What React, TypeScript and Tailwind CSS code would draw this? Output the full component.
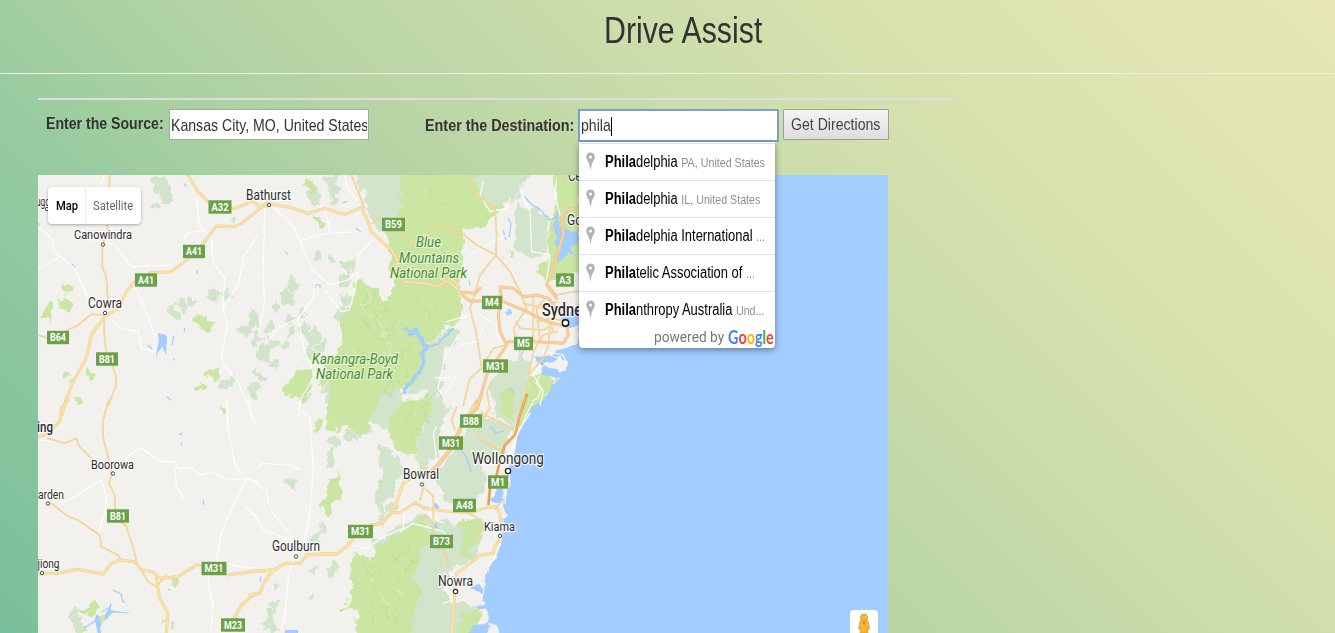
import React from "react";

const GREEN = "#cbe6a3";
const PALE = "#d2e4cb";
const WATER = "#a3ccff";
const LAND = "#f2f1ed";

type Suggestion = { match: string; rest: string; detail: string };

const suggestions: Suggestion[] = [
  { match: "Phila", rest: "delphia", detail: "PA, United States" },
  { match: "Phila", rest: "delphia", detail: "IL, United States" },
  { match: "Phila", rest: "delphia International", detail: "..." },
  { match: "Phila", rest: "telic Association of", detail: "..." },
  { match: "Phila", rest: "nthropy Australia", detail: "Und..." },
];

// Road shields: label, centre x, centre y, width
const shields: [string, number, number, number][] = [
  ["A32", 220, 207, 23], ["A41", 194, 251.5, 22], ["A41", 146, 280, 22],
  ["B64", 58, 337.5, 22], ["B81", 107, 359, 22], ["B59", 393.5, 224.5, 23],
  ["M4", 492, 302.5, 20], ["M5", 523.5, 343.5, 19], ["A3", 565, 280, 18],
  ["M31", 495.5, 366, 25], ["B88", 471, 421, 22], ["M31", 451, 443, 24],
  ["M1", 498, 482, 20], ["A48", 464.5, 505.5, 23], ["B73", 441.5, 541.5, 23],
  ["M31", 360.5, 531.5, 25], ["M31", 214, 568.5, 25], ["B81", 118, 516, 22],
  ["M23", 233, 625, 24],
];

// Town names: text, left, baseline, width, size, dot x, dot y
const towns: [string, number, number, number, number, number, number][] = [
  ["Bathurst", 246, 199.5, 45, 14, 269, 205],
  ["Canowindra", 74, 238.5, 58, 13.5, 103, 244.5],
  ["Cowra", 88, 307.5, 34, 14.5, 105, 313],
  ["Boorowa", 91, 469, 43, 13.5, 113, 473.5],
  ["arden", 38, 498.5, 26, 12.5, 48, 503.5],
  ["jiong", 37.5, 568, 22, 12.5, 42, 573],
  ["Goulburn", 272, 550.5, 48, 14.5, 296, 556.5],
  ["Bowral", 403, 479, 36, 14.5, 422, 484.5],
  ["Kiama", 484, 531, 31, 13, 500, 536],
  ["ugo", 36, 206, 14, 12, 47, 209],
];

const forest: [number, number, number][] = [
  [67, 290, 9], [65, 305, 9], [46, 312, 10], [69, 377, 7], [91, 375, 6], [79, 400, 8],
  [205, 322, 11], [214, 374, 10], [202, 387, 7], [224, 412, 7], [320, 224, 8], [309, 379, 10],
  [293, 387, 14], [175, 582, 6], [303, 397, 10], [311, 187, 9],
  [91, 611, 12], [101, 620, 7], [83, 627, 4], [509, 255, 4],
  [318, 425, 6], [330, 420, 8], [163, 622, 3], [381, 482, 7], [367, 430, 7],
];
const bush: [number, number, number][] = [
  [158, 184, 12], [165, 195, 10], [157, 207, 7], [232, 219, 5], [174, 312, 10], [182, 305, 8],
  [192, 302, 8], [214, 296, 10], [226, 296, 7], [252, 320, 11], [246, 330, 10], [256, 340, 10],
  [232, 380, 9], [224, 387, 7], [254, 390, 9], [264, 352, 10], [285, 297, 11], [294, 284, 10],
  [311, 192, 13], [332, 186, 13], [337, 200, 8], [348, 267, 11], [346, 282, 10], [316, 257, 8],
  [332, 259, 7], [276, 307, 7], [347, 299, 10], [292, 335, 8], [310, 339, 11], [315, 332, 9],
  [274, 364, 10], [285, 344, 7], [270, 329, 9], [327, 392, 10], [330, 364, 9], [332, 444, 11],
  [330, 458, 9], [352, 434, 11], [367, 427, 9], [385, 454, 13], [394, 466, 11], [384, 492, 11],
  [392, 510, 10], [382, 517, 8], [321, 530, 9], [314, 539, 8], [315, 569, 7], [332, 569, 8],
  [313, 595, 7], [278, 584, 7], [274, 607, 8], [268, 622, 11], [293, 482, 7], [76, 617, 10],
  [77, 629, 9], [310, 352, 9], [320, 347, 8], [305, 327, 7], [342, 314, 9], [270, 342, 8],
  [464, 390, 6], [497, 342, 5], [172, 627, 5], [303, 314, 7], [292, 320, 7], [258, 374, 7],
];

function blob(x: number, y: number, r: number, seed: number): string {
  const points: string[] = [];
  for (let i = 0; i < 11; i++) {
    const noise = Math.abs(Math.sin(seed * 12.9 + i * 78.2) * 43758.5) % 1;
    const d = r * (0.35 + noise * 0.7);
    const a = (i / 11) * Math.PI * 2;
    points.push((x + Math.cos(a) * d * 0.85).toFixed(1) + "," + (y + Math.sin(a) * d).toFixed(1));
  }
  return points.join(" ");
}

function Roads({ d, width, color }: { d: string; width: number; color: string }) {
  return <path d={d} stroke={color} strokeWidth={width} fill="none" strokeLinejoin="round" strokeLinecap="round" />;
}

function Highway({ d, thick = 7 }: { d: string; thick?: number }) {
  return (
    <>
      <Roads d={d} width={thick} color="#efce8e" />
      <Roads d={d} width={thick - 3} color="#f9e2a8" />
    </>
  );
}

function Motorway({ d, thick = 9 }: { d: string; thick?: number }) {
  return (
    <>
      <Roads d={d} width={thick} color="#f1bf88" />
      <Roads d={d} width={thick - 4} color="#fbd0a0" />
    </>
  );
}

function TerrainMap() {
  const halo = { paintOrder: "stroke" as const, stroke: "#ffffff", strokeWidth: 2.4, strokeOpacity: 0.85 };
  return (
    <svg viewBox="38 175 850 458" className="block h-[458px] w-[850px]" fontFamily="Roboto, sans-serif">
      <defs>
        <filter id="rough" filterUnits="userSpaceOnUse" x="38" y="175" width="850" height="458">
          <feTurbulence type="fractalNoise" baseFrequency="0.08" numOctaves="3" seed="4" result="noise" />
          <feDisplacementMap in="SourceGraphic" in2="noise" scale="16" xChannelSelector="R" yChannelSelector="G" />
        </filter>
        <filter id="shore" filterUnits="userSpaceOnUse" x="38" y="175" width="860" height="470">
          <feTurbulence type="fractalNoise" baseFrequency="0.12" numOctaves="2" seed="9" result="noise" />
          <feDisplacementMap in="SourceGraphic" in2="noise" scale="4" xChannelSelector="R" yChannelSelector="G" />
        </filter>
      </defs>
      <rect x="38" y="175" width="850" height="458" fill={LAND} />

      <g filter="url(#rough)">
        <g fill={PALE}>
          {bush.map(([x, y, r], i) => <polygon key={i} points={blob(x, y, r, i + 1)} />)}
        </g>
        <g transform="translate(300 175) scale(.33333)">
          <path fill={PALE} d="M150,-30H310L300,100L265,180L240,165L200,110L185,60ZM230,640L300,620L310,680L260,760L220,740ZM215,1110L310,1040L380,1020L460,1040L545,1035L550,1080L520,1150L450,1195L430,1240L460,1290L540,1290L540,1400H330L270,1180Z" />
          <path fill={GREEN} d="M295,-30H525L560,60L600,100L560,150L500,165L485,200L490,290L480,350L485,420L430,470L380,510L365,600L330,640L260,640L225,690L220,740L190,775L140,755L110,765L85,700L90,640L55,630L90,560L125,500L130,430L150,400L160,340L185,305L225,345L260,380L290,330L275,270L262,190L300,100Z" />
          <path fill={GREEN} d="M300,690L400,650L425,690L410,730L370,740L340,850L290,830L265,770L270,720ZM160,1135L215,1160L240,1110L300,1070L370,1030L400,1090L360,1130L340,1200L360,1260L330,1400H165L175,1310L120,1300L160,1265L150,1190ZM480,1040L540,1030L550,1080L500,1150L470,1120L495,1080Z" />
          <path fill={PALE} d="M525,-30H685L665,70L575,95L535,40ZM640,80L700,100L740,130L735,230L700,245L645,230L660,150Z" />
          <path fill={LAND} d="M490,200L560,150L630,130L640,230L690,250L700,300L740,330L900,300V500L750,620L700,600L690,530L600,590L560,720L490,690L430,690L415,610L440,520L480,430L480,340Z" />
          <path fill={PALE} d="M385,510L465,450L478,470L440,520L415,610L420,690L450,695L430,760L420,840L350,890L345,830L370,760L400,700L375,645L330,650ZM490,780L540,720L580,730L625,760L600,830L560,860L550,950L520,985L420,985L412,900L475,800ZM575,620L600,580L670,530L690,560L685,640L640,770L580,715L570,640ZM235,860L270,850L300,900L270,960L235,1010L220,980L250,930Z" />
          <path fill={GREEN} d="M750,-30H840V290L760,320L740,325L715,290L745,250L740,200L770,60ZM690,600L790,605L700,710L645,790L660,690L680,640ZM600,650L650,640L640,740L590,700ZM80,910L125,900L122,960L85,1020L60,995L82,960ZM-10,570L40,600L30,640L-10,660ZM490,1310L540,1300L550,1400H470Z" />
          <path fill={LAND} d="M440,1230L480,1190L590,1140L560,1270L500,1290L450,1270ZM585,860L560,960L555,1000L600,1050L640,900Z" />
        </g>
        <g fill={GREEN}>
          {forest.map(([x, y, r], i) => <polygon key={i} points={blob(x, y, r, i + 50)} />)}
        </g>
      </g>

      <g fill="none" stroke="#badb92" strokeWidth="1.3" strokeOpacity="0.6" filter="url(#rough)">
        <path d="M363,292l4,12l7,4l2,14l8,5l-2,9M356,315l8,5l4,12l8,7M374,290l5,14l9,9M385,305l-4,12l8,11l-4,13M348,342l11,5l6,11M397,318l-5,11l5,13M409,344l-5,15l4,12l-9,11" />
        <path d="M408,245l10,8l4,14l12,2M430,190l6,12l12,2M455,240l-10,8l3,15M418,304l12,8l1,12M430,314l10,-8l8,4M396,376l-8,8l2,12M416,407l-9,10l8,12l-7,9M436,395l-12,14l4,12l-12,11" />
        <path d="M362,562l10,13l12,-6l15,-8l9,-13M372,586l10,8l-2,14l14,12M402,576l-8,12l7,14l-9,9M367,600l9,9l1,14M414,559l-9,11l2,12M362,607l10,6l2,15M384,574l-4,8l6,9M399,607l-5,14l5,9" />
      </g>
      <path
        d="M364,288l5,10l-5,8l9,10M379,318l9,7l-3,12M387,344l6,8l-5,10M431,246l11,6l4,12M381,591l5,13M395,585l5,8M367,577l7,4M352,349l9,2"
        stroke="#dbeebf" strokeWidth="1.5" fill="none" opacity="0.8" filter="url(#rough)"
      />

      <path
        filter="url(#shore)"
        fill={WATER}
        d="M900,165V645H502L498,627L488,622L489,612L486,608L482,600L484,588L485,578L488,569L497,557L500,543L503,528L502,520L508,516L504,509L504,500L507,490L511,485L508,477L509,466L514,457L517,437L523,425L528,416L533,406L543,400L550,390L559,378L548,376L541,374L544,366L550,368L557,369L560,373L567,368L568,361L562,360L561,356L552,356L557,350L567,348L579,342V165Z"
      />
      <g fill={WATER} filter="url(#shore)">
        <path d="M535,355l6,2l4,-3l6,2l7,3l-4,3l-8,1l-4,3l-5,-4Z" />
        <path d="M560,318l9,-3l4,-7l7,2v16l-9,2l-7,-4Z" />
        <path d="M556,212l3,14l4,4l4,-3l4,6l7,-2v11l-7,5l4,8l-7,-3l-5,8l-7,3l3,-11l-6,-10l4,-6l-4,-10Z" />
        <path d="M493,497l5,-9l4,1l1,11l-3,3l-7,0l-3,-3Z" />
        <path d="M505,311l5,-2l1,4l-4,3Z M433,502l4,2l3,3l-3,2l-4,-3Z M434,525l4,-2v6l-3,1Z" />
        <path d="M470,588l9,-3l7,4l1,6l-6,-1l-4,-4Z M476,607l9,-2l2,3l-9,2Z M487,622l4,4l-4,7h-19l6,-8l11,-1Z" />
        <path d="M285,630h13v6h-14Z M94,622l4,-8l3,8l1,13h-4l-2,-10Z M109,607l2,-5l1,8l7,2l-7,1l-6,6l-2,-1Z" />
        <path d="M158,333l4,1l5,3l-1,18l-4,-9l-2,4l-4,7l1,-9l2,-7Z" />
      </g>
      <path
        fill="none" stroke={WATER} strokeWidth="1.2"
        d="M523,195l8,9l10,6l8,10l8,-3l2,-10M508,218l3,6l-2,13M506,240l-3,-10M469,280l1,6M516,321l4,7M313,285h7v3M315,284v4M343,203l4,-2M356,228l5,4M40,226l-2,-3M72,264l3,4M184,183l2,4M197,270v4M285,252l3,2M182,433l-3,2M181,442l1,3M203,500l1,5M269,505l1,6M261,576l-1,6M461,450l6,8l4,14M491,427l5,6l7,-2M510,388l4,5M168,590l3,-1M113,590l8,4l2,8l3,0M102,612l6,-4M117,612l12,1M84,628l10,-6l3,-6M185,328l-1,4M174,336l-2,9M148,345l4,4M175,359l-2,1M167,397l4,3"
      />
      <g fill="none" stroke={WATER} strokeLinejoin="round" filter="url(#shore)">
        <path d="M405,328l6,4l4,-3l3,4M408,335l10,-1l5,8l4,5l-5,6l2,9l-4,9l-7,8l-6,7l-3,8" strokeWidth="3.4" />
        <path d="M428,348l9,-4l7,-7l11,-9" strokeWidth="1.7" />
      </g>

      <g transform="translate(38 175) scale(.33333)">
        <Roads color="#fdfdfb" width={3.5} d="M0,155L40,190L50,230L110,280L150,370L195,420M150,190L230,210L280,275L400,270M475,70L485,150L520,190L525,260L560,310L555,400L570,450L550,540L555,570L600,620L630,690M660,180L620,240L600,330L555,400M290,335L320,400L350,480L350,530L310,520L300,470L250,460L205,420M440,200L445,175L500,165M200,0L180,50L150,80M0,280L60,250" />
        <Highway thick={5} d="M215,0L208,160L193,215L193,275L205,310L210,380L200,415L198,470L203,520L233,600L235,630L212,690M200,420L160,418L120,450L80,470L30,490L0,480" />
        <Highway thick={9} d="M450,0L480,50L515,85L550,100L590,100L640,80L660,88M690,80L655,110L610,145L590,155L535,153L500,200L460,245L400,290L340,293L290,320L265,350L240,400L200,425L160,480L145,550L105,620L85,670L72,720" />
      </g>
      <g transform="translate(258 175) scale(.33333)">
        <Roads color="#fdfdfb" width={3.5} d="M40,90L110,160L160,280L215,330L270,315L300,290L290,350L275,400M130,195L200,175L300,170M20,100L15,300L20,380L0,480M170,320L165,370L120,430L60,460L20,510M200,345L250,410L275,405M120,430L140,530L170,600L130,670L120,730M300,270L300,240L345,195M190,90L215,150L210,180M600,480L560,550L540,640L560,670M260,0L270,40L300,80M530,608H580" />
        <Highway thick={5} d="M280,0L300,50L320,100M345,145L360,130L400,150L440,180L460,205L510,180L545,155L600,165" />
        <Highway thick={9} d="M0,100L35,88L90,95L150,115L200,100L260,118L310,98L330,140L340,170L400,225L420,260L410,290L440,320L500,325L540,335L580,310L595,325L600,345" />
      </g>
      <g transform="translate(440 175) scale(.33333)">
        <Roads color="#fdfdfb" width={3.5} d="M245,40L255,80L270,110L275,230L330,240L320,320M130,20L120,60L150,110L200,100L210,70M90,240L140,210L200,180M50,600L20,650M20,440L90,420M120,420L170,450L180,500M60,510L110,500L130,460M230,430L280,420M300,570L280,600L310,650L300,690M350,10L345,60L360,120M310,530L370,540L380,570" />
        <Highway thick={5} d="M95,0L100,50L165,100L170,180L168,240L120,300L105,355M0,155L60,170L110,210L168,240L210,290L240,350M105,355L90,400L110,480L125,580L90,610L70,690M265,600L280,530L310,480L350,470M265,600L260,650L250,690M325,510L310,550L265,600M130,570L160,520L200,510M280,360V500M320,365L290,400L300,500M325,330L350,360L400,350L420,350M350,400L330,450L325,510M240,350L260,400L220,460L230,500M290,440L340,430L380,440M240,460L310,465L345,445M250,385L310,400L350,380M305,390L340,470M155,620L140,650L150,700L130,730" />
        <Motorway d="M60,355L90,378L130,378L190,380L250,405L320,440L380,455M112,700L140,600L200,510L180,470L175,420L185,370L180,335L220,340L250,365L290,360L325,370L350,400M205,500H290L370,505L385,480L380,450M320,330L345,260L370,180L365,130L385,100L420,100M320,330L350,370M60,352L105,355L120,340" />
        <Highway thick={8} d="M0,310L40,330L60,355" />
      </g>
      <g transform="translate(38 400) scale(.33333)">
        <Roads color="#fdfdfb" width={3.5} d="M225,218L280,160L310,145L370,185L410,185L420,205L460,205L490,225L520,215L570,240L625,235L660,245M410,205L415,260L440,300M565,0L570,80L590,190L608,225M625,235L580,330L550,400L535,480L600,500L660,505M70,310L110,290L190,240L205,290L200,340L180,400M510,525L515,570L525,620L520,690M625,320L660,355M0,120L60,125M630,0L645,60L660,75" />
        <Highway thick={5} d="M212,0L195,60L195,110L215,190L220,225L213,250L230,285L232,350L265,380L285,440L297,490M30,115L80,130L115,115L125,140L160,175M40,310L90,350L120,360L185,405L190,440L240,465L248,480M310,510L330,545L355,560L385,525" />
        <Highway thick={9} d="M90,0L70,25L65,65L30,100L0,112M0,522L60,520L120,508L195,523L220,490L245,480L290,485L310,510L345,515L365,535L420,530L475,495L520,498M355,535L365,595L390,640L385,700M570,525L660,512M585,660L610,615L640,590L660,580" />
      </g>
      <g transform="translate(250 400) scale(.33333)">
        <Roads color="#fdfdfb" width={3.5} d="M25,205L35,190L120,195L150,210M0,235L50,275L60,330L120,400L130,480L115,530L105,640L95,690M150,0L145,30L180,50L185,140L190,200L180,340L160,430M0,340L20,350L40,390L120,420M310,435L350,445L400,410L460,385L465,320" />
        <Highway thick={10} d="M0,515L70,510L110,490L150,490L170,465L210,462L260,462L290,440L310,415M70,510L40,550L30,580L0,585M365,375L395,370L430,330L460,250L500,220L530,205" />
        <Highway thick={8} d="M430,338L450,338L495,308L520,322L570,330M365,375L395,370L425,338" />
      </g>
      <g transform="translate(400 400) scale(.33333)">
        <Roads color="#fdfdfb" width={3.5} d="M0,395L40,370L130,395L160,430M110,80L100,100L110,180M320,200L330,180L345,110L390,40M310,240L320,250L315,310M160,520L130,560L160,600L130,610M90,310V350L130,370" />
        <Highway thick={5} d="M70,265L60,300M75,265L100,290V365M75,345L95,370L105,410L120,430L140,470L145,500M170,20L155,60L165,90M230,0L210,30M240,40L300,65L340,90M225,90L250,125L300,150M200,335L240,360M250,380L230,400" />
        <Highway thick={8} d="M50,308L70,325L150,335L210,338L265,322" />
        <Highway thick={9} d="M265,322L290,320L300,345L305,410L285,440L280,460L240,465L210,490L170,520L165,560L162,620L155,700" />
        <Highway thick={5} d="M285,325L310,300M315,240L330,250L320,265" />
        <Motorway thick={12} d="M242,-10L225,30L190,60L180,90L150,150L110,200L80,225" />
        <path d="M378,-8L360,45L345,105L315,135L300,180L290,225L270,265L265,315M378,-8L382,-18" fill="none" stroke="#e5a158" strokeWidth="8" strokeLinejoin="round" />
        <path d="M378,-8L360,45L345,105L315,135L300,180" fill="none" stroke="#f8b66a" strokeWidth="3" />
      </g>

      <path
        stroke="#ffffff" fill="none" strokeWidth="1.1" opacity="0.9"
        d="M540,375l-4,8l5,6l-3,9l-6,3M533,402l-6,11l-5,12l-5,10l-3,18M509,467l1,16M503,520l-2,22l-6,16l-8,10M484,588l-2,12"
      />

      <g fill="#2c2c2c">
        {towns.map(([name, x, y, w, size, dx, dy]) => (
          <g key={name}>
            <text x={x} y={y} fontSize={size} textLength={w} lengthAdjust="spacingAndGlyphs" {...halo}>{name}</text>
            <circle cx={dx} cy={dy} r="1.7" fill="#fff" stroke="#4a4a4a" strokeWidth="1" />
          </g>
        ))}
        <text x="472" y="464" fontSize="16" textLength="72" lengthAdjust="spacingAndGlyphs" {...halo}>Wollongong</text>
        <circle cx="508" cy="471" r="2.6" fill="#fff" stroke="#222" strokeWidth="1.3" />
        <text x="438" y="585.5" fontSize="15" textLength="35" lengthAdjust="spacingAndGlyphs" {...halo}>Nowra</text>
        <circle cx="455.5" cy="591.5" r="2.2" fill="#fff" stroke="#333" strokeWidth="1.2" />
        <text x="37" y="432" fontSize="14" fontWeight="500" textLength="16" lengthAdjust="spacingAndGlyphs" {...halo}>ing</text>
        <text x="542" y="316" fontSize="18" fontWeight="500" textLength="47" lengthAdjust="spacingAndGlyphs" {...halo}>Sydney</text>
        <circle cx="565.5" cy="323" r="3.2" fill="#fff" stroke="#111" strokeWidth="1.4" />
        <text x="568" y="181" fontSize="14" textLength="20" lengthAdjust="spacingAndGlyphs" {...halo}>Cen</text>
        <text x="567" y="224.5" fontSize="15" textLength="43" lengthAdjust="spacingAndGlyphs" {...halo}>Gosford</text>
      </g>

      <g fill="#468b31" fontStyle="italic" fontSize="14.2" stroke="#eaf6d8" strokeWidth="2" style={{ paintOrder: "stroke" }}>
        <text x="416" y="247" textLength="25" lengthAdjust="spacingAndGlyphs">Blue</text>
        <text x="399" y="262.500" textLength="60" lengthAdjust="spacingAndGlyphs">Mountains</text>
        <text x="390" y="278" textLength="77" lengthAdjust="spacingAndGlyphs">National Park</text>
        <text x="312" y="363.500" textLength="86" lengthAdjust="spacingAndGlyphs">Kanangra-Boyd</text>
        <text x="316" y="379" textLength="77" lengthAdjust="spacingAndGlyphs">National Park</text>
      </g>

      {shields.map(([name, cx, cy, w], i) => (
        <g key={i}>
          <rect x={cx - w / 2} y={cy - 6.7} width={w} height="13.4" fill="#6ba148" />
          <text x={cx - w / 2 + 3} y={cy + 3.9} fontSize="11" fontWeight="700" fill="#fff" textLength={w - 6} lengthAdjust="spacingAndGlyphs">{name}</text>
        </g>
      ))}
    </svg>
  );
}

function Narrow({ children, className = "" }: { children: React.ReactNode; className?: string }) {
  return <span className={`block w-max origin-left scale-x-[0.83] whitespace-nowrap ${className}`}>{children}</span>;
}

function SuggestionRow({ item }: { item: Suggestion }) {
  return (
    <li className="flex h-[37px] items-center border-t border-[#e2e2e5] pl-[7px]">
      <svg viewBox="0 0 9 19" className="-mt-[2px] mr-[10px] h-[19px] w-[9px] shrink-0">
        <path d="M4.500 0.500C2 .500 .200 2.400 .200 5c0 2.500 2 4.200 3 7.200L4.500 18.500 5.800 12.200C6.800 9.200 8.800 7.500 8.800 5 8.800 2.400 7 .500 4.500 .500Z" fill="#b3b3b3" />
        <circle cx="4.500" cy="5" r="1.500" fill="#fff" />
      </svg>
      <Narrow className="text-[15.6px] text-black">
        <b>{item.match}</b>{item.rest} <span className="text-[12.900px] text-[#8f8f8f]">{item.detail}</span>
      </Narrow>
    </li>
  );
}

export default function App() {
  return (
    <main className="h-[633px] w-full overflow-hidden bg-[linear-gradient(45deg,#7abf9b_0%,#98cba0_27.600%,#a2cfa0_32%,#b9d4a5_45.700%,#c3daa8_54.800%,#d1dfac_68%,#dee4b0_84%,#e6e7b2_100%)] font-['Liberation_Sans',Arial,sans-serif] text-[#333]">
      <header className="flex h-[74px] justify-center border-b border-[#eef1e8] pl-[63px]">
        <h1 className="mt-[9px] w-[190px] text-[36px] leading-[44px]">
          <span className="block w-max origin-left scale-x-[0.842] whitespace-nowrap">Drive Assist</span>
        </h1>
      </header>
      <section className="pl-[38px] pt-6">
        <hr className="w-[917px] border-t-2 border-[#dbdedb]" />
        <form className="mt-[9px] flex h-[66px] items-start pl-2 text-[17px]">
          <label className="w-[123px] pt-[2px] font-bold"><Narrow>Enter the Source:</Narrow></label>
          <div className="h-[31px] w-[200px] overflow-hidden border border-[#a6aaa6] bg-white pl-[1px] pr-px">
            <div className="overflow-hidden">
              <input className="block h-[31px] w-[238px] origin-left scale-x-[0.83] outline-none" defaultValue="Kansas City, MO, United States" />
            </div>
          </div>
          <label className="ml-14 w-[153px] pt-1 font-bold">
            <span className="block w-max origin-left scale-x-[0.845] whitespace-nowrap">Enter the Destination:</span>
          </label>
          <div className="relative z-10 h-[33px] w-[201px] border-2 border-[#7ba0d0] bg-white pl-[1px]">
            <input className="block h-[30px] w-[230px] origin-left scale-x-[0.83] outline-none" defaultValue="phila" />
            <span className="absolute left-[31px] top-[6px] h-[19px] w-px bg-black" />
            <div className="absolute -left-[1px] top-[31px] h-[206px] w-[196px] rounded-b-sm bg-white shadow-[0_2px_6px_rgba(0,0,0,0.4)]">
              <ul className="pt-[1px]">
                {suggestions.map((item, i) => <SuggestionRow key={i} item={item} />)}
              </ul>
              <div className="-mt-[1px] flex h-[20px] items-center justify-end pr-[1px] font-[Roboto,sans-serif]">
                <span className="w-[74px] text-[14px] text-[#777]"><span className="block w-max origin-left scale-x-[0.98] whitespace-nowrap">powered by</span></span>
                <span className="w-[46px] font-['Lato',sans-serif] text-[18px] font-bold leading-none">
                  <span className="block w-max origin-left scale-x-[0.8]">
                    <span className="text-[#4285f4]">G</span><span className="text-[#ea4335]">o</span><span className="text-[#fbbc05]">o</span><span className="text-[#4285f4]">g</span><span className="text-[#34a853]">l</span><span className="text-[#ea4335]">e</span>
                  </span>
                </span>
              </div>
            </div>
          </div>
          <button type="button" className="ml-1 h-[31px] w-[106px] rounded-[1px] border border-[#9c9f99] bg-linear-to-b from-[#f5f5f5] to-[#dddddd] pl-[7px] text-left text-[#444]">
            <Narrow>Get Directions</Narrow>
          </button>
        </form>
        <div className="relative w-[850px]">
          <TerrainMap />
          <div className="absolute left-[10px] top-[12px] flex h-[37px] w-[93px] items-center rounded-sm bg-white font-[Roboto,sans-serif] text-[13.5px] shadow-[0_1px_3px_rgba(0,0,0,0.3)]">
            <div className="flex h-full w-[38px] items-center border-r border-[#ececec] pl-2 font-medium text-black"><Narrow>Map</Narrow></div>
            <div className="pl-[7px] text-[#666]"><Narrow>Satellite</Narrow></div>
          </div>
          <div className="absolute bottom-0 right-[10px] h-[23px] w-7 overflow-hidden rounded-t-sm bg-white">
            <svg viewBox="0 0 28 23" className="h-[23px] w-7">
              <path d="M10 11.500L11.800 9.500H16.200L18.300 11.500L19.500 19H17.800V23H10.200V19H8.500Z" fill="#f9b52d" stroke="#c79a55" strokeWidth="0.8" />
              <circle cx="14" cy="7.500" r="3.500" fill="#fab62f" stroke="#b98f50" strokeWidth="0.8" />
              <path d="M12.200 12H15.800L14 15Z" fill="#e08a1c" />
            </svg>
          </div>
        </div>
      </section>
    </main>
  );
}
